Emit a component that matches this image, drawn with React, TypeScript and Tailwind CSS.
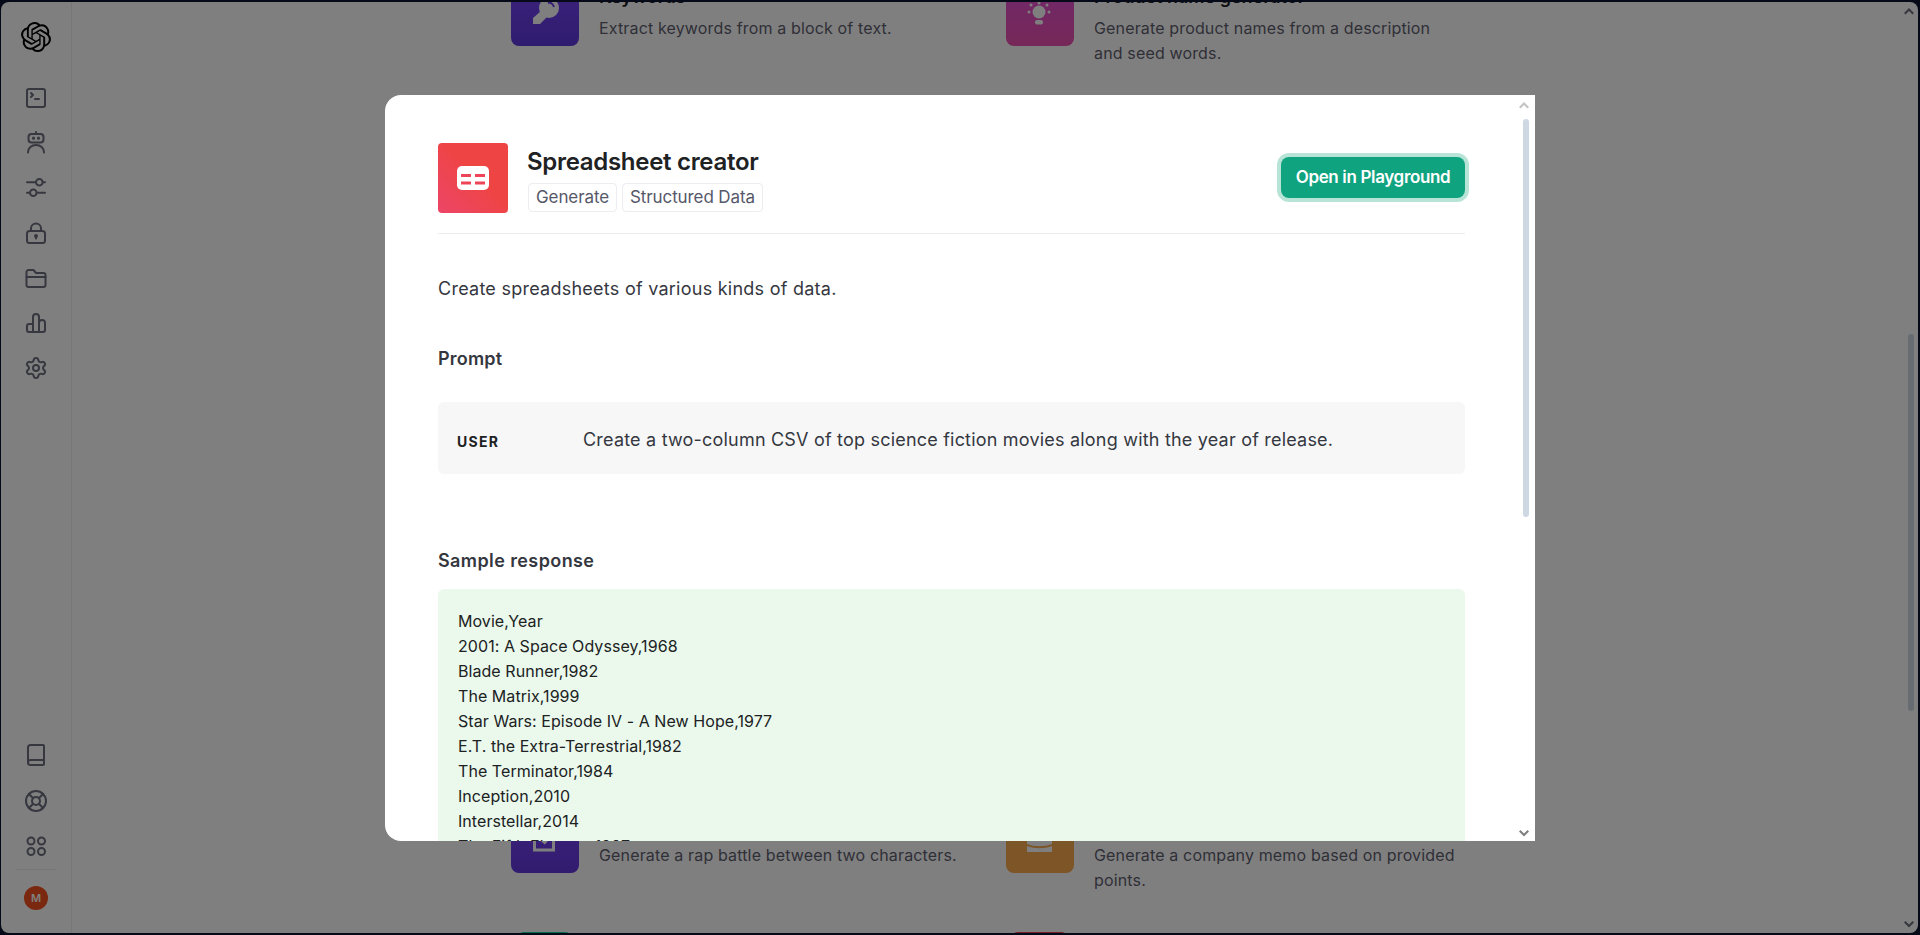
import type { ReactNode } from "react";
import { Book, LifeBuoy, Settings, SquareTerminal } from "lucide-react";
import { SiOpenai } from "react-icons/si";

const font = "font-['Inter','Liberation_Sans',sans-serif]";

function Glyph({ children }: { children: ReactNode }) {
  return (
    <svg
      viewBox="0 0 24 24"
      width={24}
      height={24}
      fill="none"
      stroke="currentColor"
      strokeWidth={2}
      strokeLinecap="round"
      strokeLinejoin="round"
    >
      {children}
    </svg>
  );
}

const topNav: ReactNode[] = [
  <SquareTerminal key="terminal" size={24} strokeWidth={2} />,
  <Glyph key="bot">
    <path d="M12 1v1" />
    <rect x="4.500" y="3" width="15" height="8.500" rx="3" />
    <circle cx="9.500" cy="7.200" r="0.600" fill="currentColor" />
    <circle cx="14.500" cy="7.200" r="0.600" fill="currentColor" />
    <path d="M4 21.500c0-4.500 3.500-7.500 8-7.500s8 3 8 7.500" />
  </Glyph>,
  <Glyph key="sliders">
    <path d="M3 6.300h8.800M18.800 6.300H21M3 16.700h2.800M12.800 16.700H21" />
    <circle cx="15.300" cy="6.300" r="3.300" />
    <circle cx="9.300" cy="16.700" r="3.300" />
  </Glyph>,
  <Glyph key="lock">
    <rect x="3" y="10" width="18" height="12" rx="2.500" />
    <path d="M7 10V7.500a5 5 0 0 1 10 0V10" />
    <circle cx="12" cy="15" r="1" fill="currentColor" />
    <path d="M12 15v2.500" />
  </Glyph>,
  <Glyph key="folder">
    <path d="M2.500 6a2 2 0 0 1 2-2h5l2.500 3h7.500a2 2 0 0 1 2 2v10a2 2 0 0 1-2 2h-15a2 2 0 0 1-2-2z" />
    <path d="M2.500 11h19" />
  </Glyph>,
  <Glyph key="bars">
    <path d="M9 21H5a2 2 0 0 1-2-2v-4a2 2 0 0 1 2-2h4zM9 21V6a3 3 0 0 1 6 0v15zM15 21h4a2 2 0 0 0 2-2v-7a3 3 0 0 0-6 0" />
  </Glyph>,
  <Settings key="settings" size={24} strokeWidth={2} />,
];

const bottomNav: ReactNode[] = [
  <Book key="book" size={24} strokeWidth={2} />,
  <LifeBuoy key="help" size={24} strokeWidth={2} />,
  <Glyph key="apps">
    <circle cx="7" cy="7" r="3.500" />
    <circle cx="17.500" cy="7" r="3.500" />
    <circle cx="7" cy="17.500" r="3.500" />
    <circle cx="17.500" cy="17.500" r="3.500" />
  </Glyph>,
];

function Sidebar() {
  return (
    <aside className="flex w-[71px] shrink-0 flex-col items-center border-r border-[#ececf1] pb-[23px] pt-5 text-[#6e6e80]">
      <SiOpenai size={30} className="mb-[23px] text-black" />
      {topNav.map((icon, i) => (
        <div key={i} className="flex h-[45px] items-center justify-center">
          {icon}
        </div>
      ))}
      <div className="mt-auto flex flex-col items-center">
        {bottomNav.map((icon, i) => (
          <div key={i} className="flex h-[45.500px] items-center justify-center">
            {icon}
          </div>
        ))}
        <div className="mb-4 w-10 border-t border-[#ececf1]" />
        <div className="flex h-6 w-6 items-center justify-center rounded-full bg-[#f4511e] text-[11px] font-semibold text-white">
          M
        </div>
      </div>
    </aside>
  );
}

type Example = { title: string; lines: string[]; tile: string; icon?: ReactNode };

function ExampleCard({ title, lines, tile, icon }: Example) {
  return (
    <div className="flex gap-5">
      <div className={`relative h-[68px] w-[68px] shrink-0 overflow-hidden rounded-lg ${tile}`}>{icon}</div>
      <div className="pt-[5px]">
        <div className="mb-[5px] text-[18px] font-semibold leading-[28px] text-[#202123]">{title}</div>
        {lines.map((line) => (
          <div key={line} className="text-[16px] leading-[25px] tracking-[0.15px] text-[#5f5f70]">
            {line}
          </div>
        ))}
      </div>
    </div>
  );
}

const firstRow: Example[] = [
  {
    title: "Keywords",
    lines: ["Extract keywords from a block of text."],
    tile: "bg-gradient-to-b from-[#7c45fe] to-[#5e39de]",
    icon: (
      <svg viewBox="0 0 68 68" className="absolute inset-0" fill="white">
        <circle cx="38" cy="30" r="10" />
        <path d="M22 40l8-7 6 6-7 7h-7z" />
        <path d="M37 25c3-1 5 1 6 4" fill="none" stroke="#6c3ff0" strokeWidth="2" />
      </svg>
    ),
  },
  {
    title: "Product name generator",
    lines: ["Generate product names from a description", "and seed words."],
    tile: "bg-gradient-to-b from-[#e050d8] to-[#ec50b0]",
    icon: (
      <svg viewBox="0 0 68 68" className="absolute inset-0" fill="white">
        <circle cx="33" cy="34" r="6.500" />
        <rect x="29" y="42" width="8" height="4.500" rx="2" />
        <circle cx="33" cy="25" r="1.500" />
        <circle cx="23" cy="34" r="1.500" />
        <circle cx="43" cy="34" r="1.500" />
        <circle cx="25" cy="27" r="1.500" />
        <circle cx="41" cy="27" r="1.500" />
      </svg>
    ),
  },
];

const lastRow: Example[] = [
  {
    title: "Rap battle writer",
    lines: ["Generate a rap battle between two characters."],
    tile: "bg-gradient-to-b from-[#7c45fe] to-[#6338de]",
    icon: (
      <svg viewBox="0 0 68 68" className="absolute inset-0" fill="none" stroke="white" strokeWidth="3">
        <path d="M36 26H23.500v19h19V34" />
        <path d="M32 38l10-12" strokeWidth="5" />
      </svg>
    ),
  },
  {
    title: "Memo writer",
    lines: ["Generate a company memo based on provided", "points."],
    tile: "bg-gradient-to-b from-[#fbae55] to-[#fbaa4d]",
    icon: (
      <svg viewBox="0 0 68 68" className="absolute inset-0" fill="white">
        <rect x="21" y="30" width="25" height="17" />
        <path d="M21 39c8 3 17 3 25 0v2c-8 3-17 3-25 0z" fill="#fbaa4d" />
      </svg>
    ),
  },
];

function Examples() {
  return (
    <main className="min-w-0 flex-1 overflow-hidden">
      <div className="-mt-[24px] pl-[439px]">
        <div className="grid h-[127px] grid-cols-[495px_496px]">
          {firstRow.map((ex) => (
            <ExampleCard key={ex.title} {...ex} />
          ))}
        </div>
        <div className="h-[700px]" />
        <div className="grid h-[127px] grid-cols-[495px_496px]">
          {lastRow.map((ex) => (
            <ExampleCard key={ex.title} {...ex} />
          ))}
        </div>
        <div className="grid h-[68px] grid-cols-[495px_496px]">
          <div className="ml-[5px] h-[68px] w-[57px] rounded-lg bg-[#15d6a0]" />
          <div className="ml-[4px] h-[68px] w-[59px] rounded-lg bg-[#f03a58]" />
        </div>
      </div>
    </main>
  );
}

function Arrow({ down, className }: { down?: boolean; className: string }) {
  return (
    <svg viewBox="0 0 10 7" width={10} height={7} className={`absolute ${className}`} fill="currentColor">
      <path d={down ? "M0 1.500L1.500 0 5 3.500 8.500 0 10 1.500 5 6.500z" : "M0 5L5 0l5 5-1.500 1.500L5 3 1.500 6.500z"} />
    </svg>
  );
}

const csv = [
  "Movie,Year",
  "2001: A Space Odyssey,1968",
  "Blade Runner,1982",
  "The Matrix,1999",
  "Star Wars: Episode IV - A New Hope,1977",
  "E.T. the Extra-Terrestrial,1982",
  "The Terminator,1984",
  "Inception,2010",
  "Interstellar,2014",
  "The Fifth Element,1997",
];

function SpreadsheetModal() {
  return (
    <div className="absolute left-[385px] top-[95px] h-[746px] w-[1150px] overflow-hidden rounded-l-2xl bg-white pl-[53px] pr-[70px] pt-[48px] text-[#353740]">
      <div className="flex items-start justify-between border-b border-[#ececf1] pb-5">
        <div className="flex gap-[19px]">
          <div className="flex h-[70px] w-[70px] items-center justify-center rounded bg-gradient-to-tr from-[#ec4567] to-[#ef4444] to-55%">
            <svg viewBox="0 0 32 24" width={32} height={24}>
              <rect width="32" height="24" rx="5" fill="white" />
              <path d="M4 9.500h10M18 9.500h10M4 17h10M18 17h10" stroke="#ef4458" strokeWidth="3" />
            </svg>
          </div>
          <div>
            <h2 className="mt-[3px] text-[24px] font-semibold leading-[32px] tracking-[-0.3px] text-[#202123]">
              Spreadsheet creator
            </h2>
            <div className="ml-px mt-[5px] flex gap-[5px]">
              <span className="flex h-[29px] w-[89px] items-center justify-center rounded border border-[#ececf1] text-[17px] tracking-[-0.1px] text-[#565869]">
                Generate
              </span>
              <span className="flex h-[29px] w-[141px] items-center justify-center rounded border border-[#ececf1] text-[17px] tracking-[-0.1px] text-[#565869]">
                Structured Data
              </span>
            </div>
          </div>
        </div>
        <button className="mt-[14px] flex h-[41px] w-[184px] items-center justify-center rounded-lg bg-[#10a37f] pt-px text-[17px] font-semibold tracking-[-0.35px] text-white ring-4 ring-[#b8e4d8]">
          Open in Playground
        </button>
      </div>

      <p className="mt-[41px] text-[18px] leading-[28px] tracking-[0.25px]">Create spreadsheets of various kinds of data.</p>

      <h3 className="mt-[42px] text-[18px] font-semibold leading-[28px] tracking-[0.2px]">Prompt</h3>
      <div className="mt-[29px] flex h-[72px] items-center rounded-md bg-[#f7f7f8] px-[19px]">
        <span className="w-[126px] shrink-0 pt-[6px] text-[14px] font-bold tracking-[1.300px] text-[#202123]">USER</span>
        <span className="pt-[3px] text-[18px] leading-[28px] tracking-[0.2px]">
          Create a two-column CSV of top science fiction movies along with the year of release.
        </span>
      </div>

      <h3 className="mt-[73px] text-[18px] font-semibold leading-[28px] tracking-[0.4px]">Sample response</h3>
      <div className="mt-[14px] rounded-md bg-[#eaf9ec] px-5 pb-5 pt-[20px] text-[16px] leading-[25px] tracking-[0.06px] text-[#202123]">
        {csv.map((line) => (
          <div key={line}>{line}</div>
        ))}
      </div>

      <Arrow className="left-[1134px] top-[7px] text-[#c4c4c4]" />
      <div className="absolute left-[1138px] top-[24px] h-[398px] w-[6px] rounded-full bg-[#cdd8e3]" />
      <Arrow down className="left-[1134px] top-[735px] text-[#808080]" />
    </div>
  );
}

export default function App() {
  return (
    <div className={`relative h-screen w-full overflow-hidden bg-[#0c1430] pb-[2px] pl-[1px] pr-[2px] pt-[2px] ${font}`}>
      <div className="relative flex h-full overflow-hidden rounded-lg bg-white">
        <Sidebar />
        <Examples />
        <Arrow className="right-[4px] top-[6px] text-[#6e6e80]" />
        <div className="absolute right-[4px] top-[332px] h-[377px] w-[6px] rounded-full bg-[#cdd8e3]" />
        <Arrow down className="bottom-[5px] right-[4px] text-[#6e6e80]" />
      </div>
      <div className="absolute inset-0 bg-black/50" />
      <SpreadsheetModal />
    </div>
  );
}
